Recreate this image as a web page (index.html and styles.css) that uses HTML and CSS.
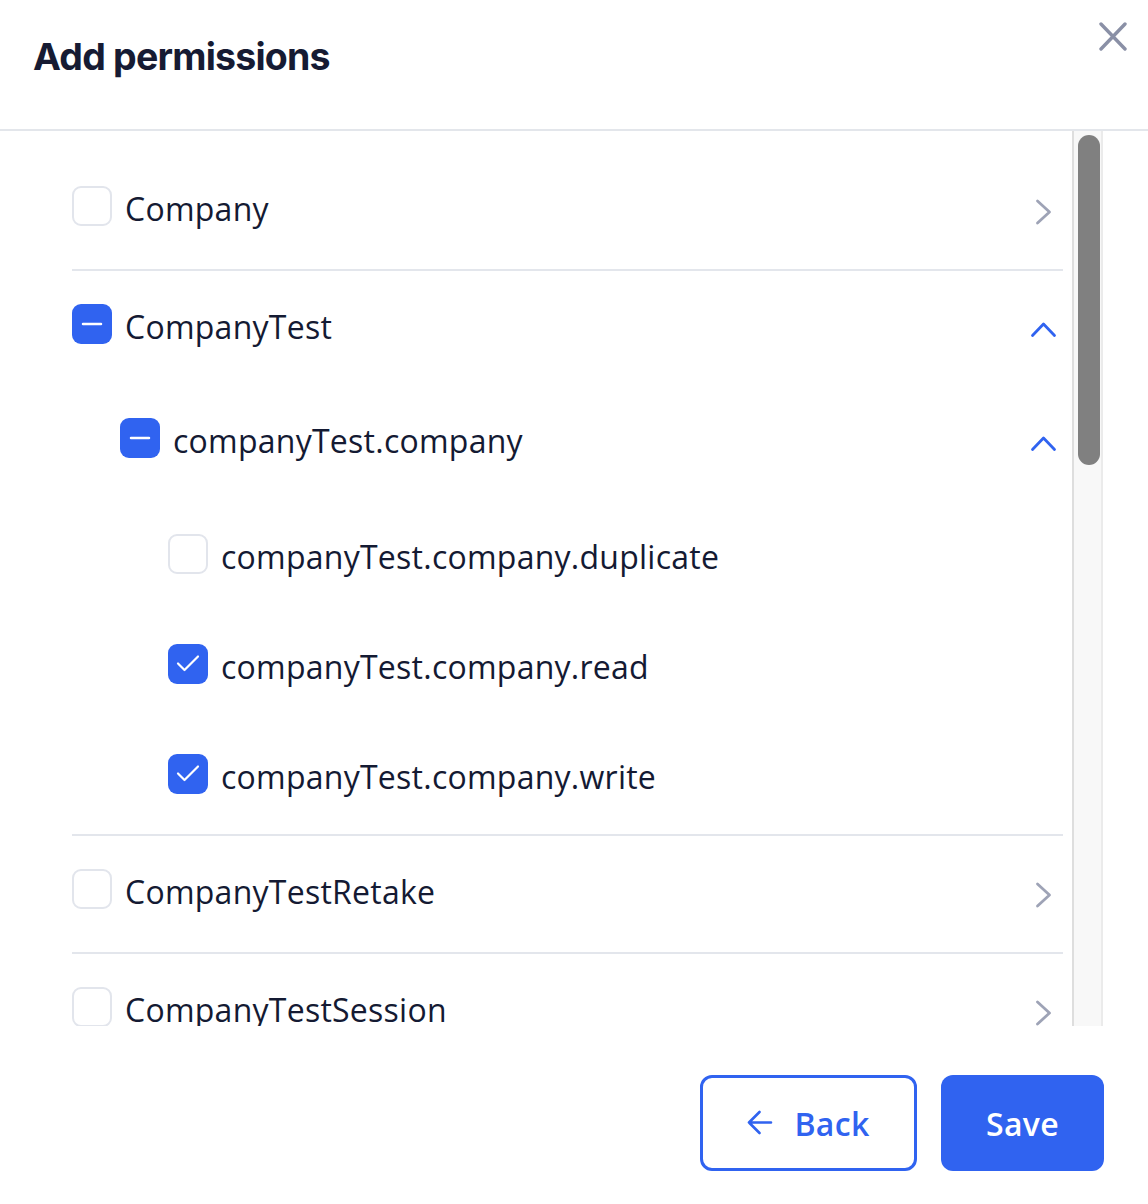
FILE: index.html
```html
<!DOCTYPE html>
<html lang="en">
<head>
<meta charset="utf-8">
<title>Add permissions</title>
<link rel="stylesheet" href="styles.css">
</head>
<body>
<div class="modal">
  <header class="modal-header">
    <h1 class="modal-title">Add permissions</h1>
    <button class="close-btn" aria-label="Close">
      <svg width="28" height="29" viewBox="0 0 28 29"><path d="M2 2 L26 27 M26 2 L2 27" fill="none" stroke="#8a90a6" stroke-width="3.4" stroke-linecap="round"/></svg>
    </button>
  </header>

  <div class="modal-body">
    <div class="perm-list">
      <div class="perm-item">
        <div class="perm-row">
          <span class="cb"></span>
          <span class="label">Company</span>
          <span class="chev"><svg width="40" height="40" viewBox="0 0 40 40"><path d="M14.5 15 L26.5 26 L14.5 37" fill="none" stroke="#9ea3b6" stroke-width="2.8" stroke-linecap="round" stroke-linejoin="round"/></svg></span>
        </div>
      </div>

      <div class="perm-item expanded">
        <div class="perm-row">
          <span class="cb cb-on"><svg width="40" height="40" viewBox="0 0 40 40"><path d="M11 20 L29 20" stroke="#fff" stroke-width="2.5" stroke-linecap="round"/></svg></span>
          <span class="label">CompanyTest</span>
          <span class="chev"><svg width="40" height="40" viewBox="0 0 40 40"><path d="M9.5 31.5 L20.5 20 L31.5 31.5" fill="none" stroke="#3063f0" stroke-width="2.8" stroke-linecap="round" stroke-linejoin="round"/></svg></span>
        </div>
        <div class="perm-row child">
          <span class="cb cb-on"><svg width="40" height="40" viewBox="0 0 40 40"><path d="M11 20 L29 20" stroke="#fff" stroke-width="2.5" stroke-linecap="round"/></svg></span>
          <span class="label">companyTest.company</span>
          <span class="chev"><svg width="40" height="40" viewBox="0 0 40 40"><path d="M9.5 31.5 L20.5 20 L31.5 31.5" fill="none" stroke="#3063f0" stroke-width="2.8" stroke-linecap="round" stroke-linejoin="round"/></svg></span>
        </div>
        <div class="leaf-list">
          <div class="perm-row leaf">
            <span class="cb"></span>
            <span class="label">companyTest.company.duplicate</span>
          </div>
          <div class="perm-row leaf">
            <span class="cb cb-on"><svg width="40" height="40" viewBox="0 0 40 40"><path d="M10 19.5 L16.5 26 L30 12.5" fill="none" stroke="#fff" stroke-width="2.2" stroke-linecap="round" stroke-linejoin="round"/></svg></span>
            <span class="label">companyTest.company.read</span>
          </div>
          <div class="perm-row leaf">
            <span class="cb cb-on"><svg width="40" height="40" viewBox="0 0 40 40"><path d="M10 19.5 L16.5 26 L30 12.5" fill="none" stroke="#fff" stroke-width="2.2" stroke-linecap="round" stroke-linejoin="round"/></svg></span>
            <span class="label">companyTest.company.write</span>
          </div>
        </div>
      </div>

      <div class="perm-item">
        <div class="perm-row">
          <span class="cb"></span>
          <span class="label">CompanyTestRetake</span>
          <span class="chev"><svg width="40" height="40" viewBox="0 0 40 40"><path d="M14.5 15 L26.5 26 L14.5 37" fill="none" stroke="#9ea3b6" stroke-width="2.8" stroke-linecap="round" stroke-linejoin="round"/></svg></span>
        </div>
      </div>

      <div class="perm-item">
        <div class="perm-row">
          <span class="cb"></span>
          <span class="label">CompanyTestSession</span>
          <span class="chev"><svg width="40" height="40" viewBox="0 0 40 40"><path d="M14.5 15 L26.5 26 L14.5 37" fill="none" stroke="#9ea3b6" stroke-width="2.8" stroke-linecap="round" stroke-linejoin="round"/></svg></span>
        </div>
      </div>
    </div>

    <div class="scrollbar">
      <div class="thumb"></div>
    </div>
  </div>

  <footer class="modal-footer">
    <button class="btn btn-outline">
      <svg width="26" height="26" viewBox="0 0 26 26"><path d="M2 12.5 L24 12.5 M12.5 2 L2 12.5 L12.5 23" fill="none" stroke="#3063f0" stroke-width="2.6" stroke-linecap="round" stroke-linejoin="round"/></svg>
      <span>Back</span>
    </button>
    <button class="btn btn-primary">Save</button>
  </footer>
</div>
</body>
</html>
```

FILE: styles.css
```css
* { box-sizing: border-box; }

html, body {
  margin: 0;
  padding: 0;
  background: #ffffff;
}

body {
  font-family: "Open Sans", "Liberation Sans", sans-serif;
  color: #141a33;
}

.modal {
  width: 1148px;
  height: 1204px;
  background: #fff;
  overflow: hidden;
}

.modal-header {
  height: 131px;
  border-bottom: 2px solid #e3e6eb;
  display: flex;
  justify-content: space-between;
  align-items: flex-start;
  padding: 0 21px 0 33px;
}

.modal-title {
  margin: 33px 0 0 0;
  font-family: "Inter", "Liberation Sans", sans-serif;
  font-weight: 700;
  font-size: 37.5px;
  line-height: 48px;
  letter-spacing: -0.8px;
  color: #161b33;
}

.close-btn {
  margin-top: 22px;
  padding: 0;
  border: 0;
  background: transparent;
  width: 28px;
  height: 29px;
  display: block;
}
.close-btn svg { display: block; }

.modal-body {
  display: flex;
  height: 895px;
  padding-left: 72px;
  margin-right: 45px;
}

.perm-list {
  flex: 1;
  overflow: hidden;
  padding-top: 22px;
}

.perm-item {
  border-bottom: 2px solid #e3e6ec;
  padding-bottom: 10px;
}
.perm-item.expanded { padding-bottom: 5px; }

.perm-row {
  display: flex;
  align-items: center;
  height: 106px;
}
.perm-row.child {
  height: 122px;
  padding-left: 48px;
}
.perm-row.leaf {
  height: 110px;
  padding-left: 96px;
}

.cb {
  flex: 0 0 40px;
  width: 40px;
  height: 40px;
  border: 2px solid #e2e5ec;
  border-radius: 9px;
  background: #fff;
  display: block;
}
.cb-on {
  border: 0;
  background: #3063f0;
}
.cb svg { display: block; }

.label {
  flex: 1;
  margin-left: 13px;
  padding-top: 6px;
  font-size: 32px;
  line-height: 40px;
  font-weight: 400;
  letter-spacing: 0.25px;
  color: #141a33;
  white-space: nowrap;
}

.chev {
  flex: 0 0 40px;
  width: 40px;
  height: 40px;
}
.chev svg { display: block; }

.scrollbar {
  flex: 0 0 31px;
  margin-left: 9px;
  background: #f8f8f8;
  border-left: 2px solid #dedede;
  border-right: 2px solid #ebebeb;
  padding: 4px 1px 0 4px;
}
.thumb {
  width: 22px;
  height: 330px;
  border-radius: 11px;
  background: #808080;
}

.modal-footer {
  display: flex;
  justify-content: flex-end;
  gap: 24px;
  padding: 49px 44px 0 0;
}

.btn {
  height: 96px;
  border-radius: 12px;
  font-family: "Open Sans", "Liberation Sans", sans-serif;
  font-size: 32px;
  font-weight: 600;
  letter-spacing: 0.3px;
  display: flex;
  align-items: center;
  justify-content: center;
  padding: 0;
}

.btn-outline {
  width: 217px;
  border: 3px solid #3063f0;
  background: #fff;
  color: #3063f0;
  gap: 21px;
}
.btn-outline svg { display: block; }

.btn-primary {
  width: 163px;
  border: 0;
  background: #3063f0;
  color: #fff;
}
```
